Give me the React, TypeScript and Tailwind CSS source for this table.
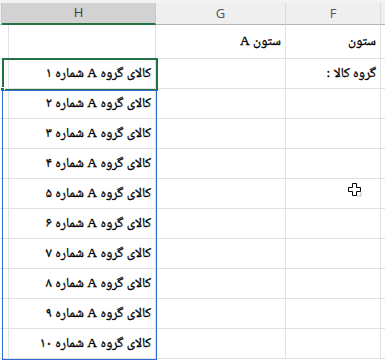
import React from "react";

const fa = (n: number) => n.toLocaleString("fa-IR");

const cols = "grid grid-cols-[2px_154px_130px_95px_1fr]";

function HeaderCell({ label, active }: { label: string; active?: boolean }) {
  return (
    <div
      className={
        active
          ? "flex h-[22px] items-center justify-center border-r border-[#c8c8c8] border-b-2 border-b-[#217346] bg-[#d2d2d2] text-[13px] text-[#3b3b3b]"
          : "flex h-[22px] items-center justify-center border-r border-[#dcdcdc] border-b border-b-[#b4b4b4] bg-[#efefef] text-[13px] text-[#555]"
      }
    >
      {label}
    </div>
  );
}

function Cell({ text, h = "h-[30px]" }: { text?: string; h?: string }) {
  return (
    <div
      dir="rtl"
      className={`${h} flex items-center justify-start overflow-hidden whitespace-nowrap border-r border-b border-[#e1e1e1] px-[4px] pb-[1px] text-[13.5px] text-black [-webkit-text-stroke:0.35px_#000]`}
    >
      {text}
    </div>
  );
}

export default function App() {
  const items = Array.from({ length: 10 }, (_, i) => `کالای گروه A شماره ${fa(i + 1)}`);

  return (
    <div
      className="relative h-[363px] w-[385px] overflow-hidden bg-white"
      style={{
        fontFamily:
          '"Liberation Serif", "Noto Naskh Arabic", "Noto Serif Arabic", "Noto Sans Arabic", "DejaVu Sans", serif',
      }}
    >
      <div className="h-[3px] bg-[#f3f3f3]" />

      <div className={cols} style={{ fontFamily: '"Open Sans", "Liberation Sans", sans-serif' }}>
        <div className="h-[22px] border-r border-[#c8c8c8] border-b border-b-[#b4b4b4] bg-[#efefef]" />
        <HeaderCell label="H" active />
        <HeaderCell label="G" />
        <HeaderCell label="F" />
        <div className="h-[22px] border-b border-[#b4b4b4] bg-[#efefef]" />
      </div>

      {/* row 1 */}
      <div className={cols}>
        <Cell h="h-[34px]" />
        <Cell h="h-[34px]" />
        <Cell h="h-[34px]" text="ستون A" />
        <Cell h="h-[34px]" text="ستون" />
        <div className="h-[34px] border-b border-[#e1e1e1]" />
      </div>

      {items.map((t, i) => (
        <div key={i} className={cols}>
          <Cell />
          <Cell text={t} />
          <Cell />
          <Cell text={i === 0 ? "گروه کالا :" : undefined} />
          <div className="h-[30px] border-b border-[#e1e1e1]" />
        </div>
      ))}

      {/* active cell */}
      <div className="pointer-events-none absolute left-[2px] top-[58px] h-[33px] w-[156px] border-2 border-[#217346]" />
      <div className="pointer-events-none absolute left-0 top-[87px] h-[5px] w-[5px] border border-white bg-[#217346]" />

      {/* copied range */}
      <div className="pointer-events-none absolute left-[2px] top-[90px] h-[270px] w-[155px] border border-[#2f6bd3]" />

      {/* mouse cursor */}
      <svg className="pointer-events-none absolute left-[347px] top-[182px]" width="15" height="15" viewBox="0 0 15 15">
        <path d="M5.5 1.5h4v4h4v4h-4v4h-4v-4h-4v-4h4z" fill="#fff" stroke="#000" strokeWidth="1" />
        <path d="M10 14h4v-4" fill="none" stroke="#000" strokeOpacity="0.25" strokeWidth="1" />
      </svg>
    </div>
  );
}
